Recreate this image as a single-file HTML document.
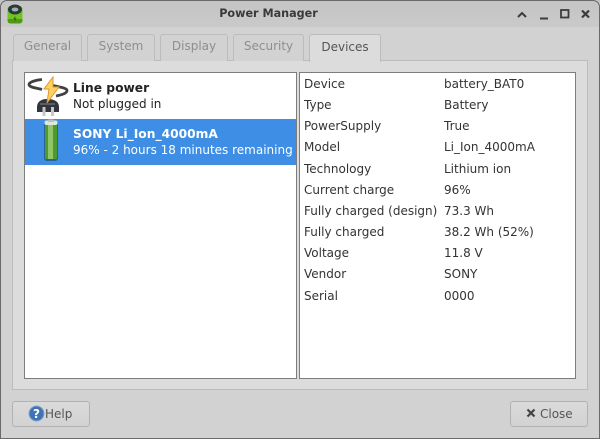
<!DOCTYPE html>
<html>
<head>
<meta charset="utf-8">
<style>
html,body{margin:0;padding:0;background:#d2d2d2}
#w{position:relative;width:600px;height:439px;overflow:hidden;background:#d2d2d2;font-family:"DejaVu Sans",sans-serif;font-size:12px;color:#333;filter:blur(.3px)}
#w div{position:absolute;box-sizing:border-box;white-space:nowrap}
.edge{left:0;top:0;width:600px;height:439px;border:1.5px solid #6a6a6a;border-radius:7px 7px 0 0;z-index:9}
.tb{left:0;top:0;width:600px;height:27px;background:linear-gradient(#c4c4c4,#cacaca)}
.title{left:0;width:537px;top:6px;text-align:center;font-weight:bold;font-size:11.2px;color:#3a3a3a;line-height:16px}
.tab{top:34px;height:27px;background:#d2d2d2;border:1px solid #bcbcbc;border-bottom:0;border-radius:3px 3px 0 0;text-align:center;line-height:23px;color:#8e8e8e}
.nb{left:12px;top:60px;width:576px;height:330px;background:#dcdcdc;border:1px solid #bcbcbc}
.active{left:309px;top:34px;width:72px;height:28px;background:#dcdcdc;border:1px solid #bcbcbc;border-bottom:0;border-radius:3px 3px 0 0;text-align:center;line-height:25px;color:#555}
.pane{top:72px;height:307px;background:#fff;border:1px solid #7d7d7d}
.sel{left:25px;top:119px;width:271px;height:46px;background:#3d8ee4}
.t{line-height:16px;color:#333;margin-top:1px}
.b{font-weight:bold;font-size:12.25px}
.btn{top:401px;height:26px;background:linear-gradient(#dadada,#d2d2d2);border:1px solid #b2b2b2;border-radius:3px;color:#555;line-height:24px}
</style>
</head>
<body>
<div id="w">
<div class="tb"></div>
<svg style="position:absolute;left:6px;top:3px" width="18" height="22" viewBox="0 0 18 22">
<rect x="1.500" y="3" width="15" height="17.500" rx="3" fill="#6fc423"/>
<path d="M1.500 16v1.500a3 3 0 0 0 3 3h9a3 3 0 0 0 3-3V16z" fill="#4f9a12"/>
<ellipse cx="9" cy="6.500" rx="7" ry="5" fill="#2a3a3c"/>
<ellipse cx="9" cy="6.500" rx="3.400" ry="2" fill="#9fb0b4"/>
<path d="M9.500 13l-2 3h1.500l-.5 2.500 2-3H9z" fill="#244a10"/>
</svg>
<div class="title">Power Manager</div>
<svg style="position:absolute;left:515px;top:7px" width="78" height="14" viewBox="0 0 78 14" fill="none" stroke="#3c3c3c" stroke-width="2">
<path d="M3 10l4-4 4 4"/>
<path d="M25 11.500h8"/>
<rect x="46" y="3" width="7.500" height="7.500" stroke-width="1.800"/>
<path d="M67 3.500l7 7m0-7l-7 7" stroke-width="2.200"/>
</svg>
<div class="nb"></div>
<div class="tab" style="left:13px;width:69px">General</div>
<div class="tab" style="left:87px;width:68px">System</div>
<div class="tab" style="left:160px;width:68px">Display</div>
<div class="tab" style="left:233px;width:71px">Security</div>
<div class="active">Devices</div>
<div class="pane" style="left:24px;width:273px"></div>
<div class="pane" style="left:299px;width:277px"></div>
<div class="sel"></div>
<svg style="position:absolute;left:24px;top:72px" width="50" height="48" viewBox="0 0 50 48">
<path d="M18 7.500C12 8 5 10 5 12.500c0 3 8 3.500 13 5" fill="none" stroke="#404040" stroke-width="2.800"/>
<path d="M27 13c6 2 16 2.500 16 5.500 0 3-6 4.500-11 5.500" fill="none" stroke="#404040" stroke-width="2.800"/>
<path d="M23 27c-6 0-10 3-10 8v5h22v-5c0-5-4-8-12-8z" fill="#32353b"/>
<path d="M16 31h15v2H16z" fill="#5a5d63"/>
<rect x="18.500" y="35" width="3" height="9" fill="#c8c8c8"/>
<rect x="27" y="35" width="3" height="9" fill="#c8c8c8"/>
<path d="M29 5L20 17h5l-2 14 12-16h-6z" fill="#fcd360" stroke="#e0962c" stroke-width="1"/>
</svg>
<svg style="position:absolute;left:43px;top:119px" width="16" height="44" viewBox="0 0 16 44">
<rect x="1" y="3" width="14" height="39" rx="3" fill="#2c6292"/>
<rect x="2" y="3" width="12" height="37" rx="1" fill="#4f9a2e"/>
<rect x="5" y="5" width="5" height="35" fill="#8fc768"/>
<rect x="1.500" y="1.500" width="13" height="4.500" rx="2" fill="#dfe6da"/>
<rect x="5" y="0.500" width="6" height="2.500" fill="#b9c0c0"/>
</svg>
<div class="t b" style="left:73px;top:79px;color:#222">Line power</div>
<div class="t" style="left:73px;top:95px;color:#222">Not plugged in</div>
<div class="t b" style="left:73px;top:125px;color:#fff">SONY Li_Ion_4000mA</div>
<div class="t" style="left:73px;top:141px;color:#fff">96% - 2 hours 18 minutes remaining</div>

<div class="t" style="left:304px;top:75px">Device</div><div class="t" style="left:444px;top:75px">battery_BAT0</div>
<div class="t" style="left:304px;top:96px">Type</div><div class="t" style="left:444px;top:96px">Battery</div>
<div class="t" style="left:304px;top:117px">PowerSupply</div><div class="t" style="left:444px;top:117px">True</div>
<div class="t" style="left:304px;top:138px">Model</div><div class="t" style="left:444px;top:138px">Li_Ion_4000mA</div>
<div class="t" style="left:304px;top:160px">Technology</div><div class="t" style="left:444px;top:160px">Lithium ion</div>
<div class="t" style="left:304px;top:181px">Current charge</div><div class="t" style="left:444px;top:181px">96%</div>
<div class="t" style="left:304px;top:202px">Fully charged (design)</div><div class="t" style="left:444px;top:202px">73.3 Wh</div>
<div class="t" style="left:304px;top:223px">Fully charged</div><div class="t" style="left:444px;top:223px">38.2 Wh (52%)</div>
<div class="t" style="left:304px;top:244px">Voltage</div><div class="t" style="left:444px;top:244px">11.8 V</div>
<div class="t" style="left:304px;top:265px">Vendor</div><div class="t" style="left:444px;top:265px">SONY</div>
<div class="t" style="left:304px;top:287px">Serial</div><div class="t" style="left:444px;top:287px">0000</div>

<div class="btn" style="left:12px;width:78px"></div>
<svg style="position:absolute;left:28px;top:405px" width="17" height="17" viewBox="0 0 17 17">
<circle cx="8.500" cy="8.500" r="7.500" fill="#3f73b8" stroke="#8aa5c8" stroke-width="1"/>
<text x="8.500" y="13" text-anchor="middle" font-family="'DejaVu Sans',sans-serif" font-weight="bold" font-size="12" fill="#fff">?</text>
</svg>
<div class="t" style="left:45px;top:405px;color:#555">Help</div>
<div class="btn" style="left:510px;width:78px"></div>
<svg style="position:absolute;left:526px;top:408px" width="10" height="10" viewBox="0 0 10 10"><path d="M1.500 1.500l7 7m0-7l-7 7" stroke="#444" stroke-width="2.200" fill="none"/></svg>
<div class="t" style="left:540px;top:405px;color:#555">Close</div>
<div class="edge"></div>
</div>
</body>
</html>
